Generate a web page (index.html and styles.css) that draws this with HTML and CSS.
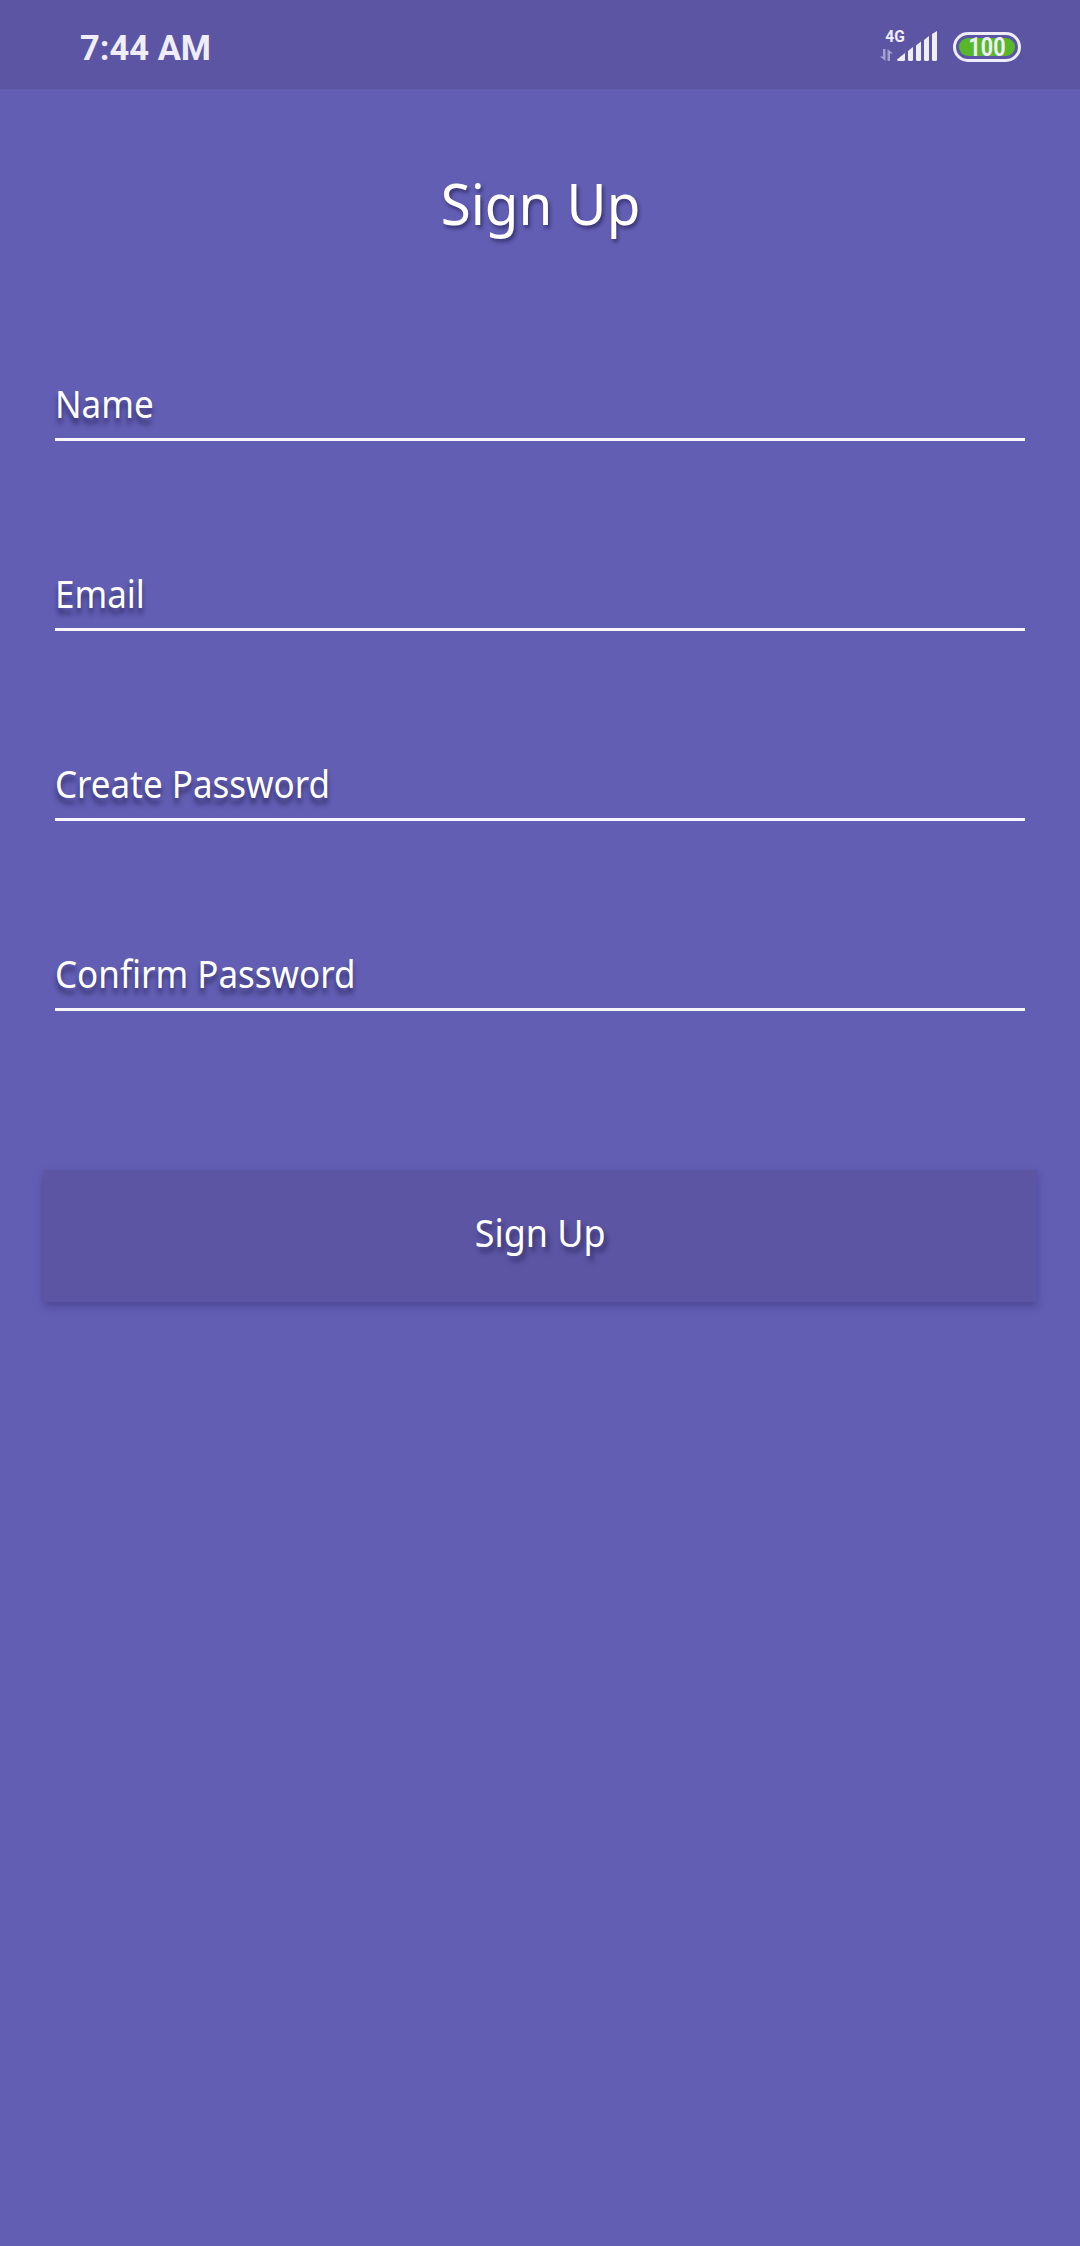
FILE: index.html
```html
<!DOCTYPE html>
<html lang="en">
<head>
<meta charset="utf-8">
<title>Sign Up</title>
<link rel="stylesheet" href="styles.css">
</head>
<body>
<header class="status">
  <span class="time">7:44 AM</span>
  <svg class="signal" width="60" height="40" viewBox="0 0 60 40">
    <text class="network" x="5.3" y="14.3" textLength="19.5" lengthAdjust="spacingAndGlyphs">4G</text>
    <g fill="#a5a0d0">
      <path d="M3 21H5.5V33L0 28.5H3Z"/>
      <path d="M7.500 21L13 25.500H10V33H7.500Z"/>
    </g>
    <g fill="#efedfa">
      <path d="M17 31.500L25 25V31.500Q25 33 23.500 33H18.500Q17 33 17 31.500Z"/>
      <path d="M28 23L33 19V31.500Q33 33 31.500 33H29.500Q28 33 28 31.500Z"/>
      <path d="M36 17.500L41 13.500V31.500Q41 33 39.500 33H37.500Q36 33 36 31.500Z"/>
      <path d="M44 12L49 8V31.500Q49 33 47.500 33H45.500Q44 33 44 31.500Z"/>
      <path d="M52 6L57 3V31.500Q57 33 55.500 33H53.500Q52 33 52 31.500Z"/>
    </g>
  </svg>
  <svg class="battery" width="68" height="30" viewBox="0 0 68 30">
    <rect x="1.5" y="1.5" width="65" height="27" rx="13.5" fill="none" stroke="#efedfa" stroke-width="3"/>
    <rect x="6" y="6" width="56" height="18" rx="9" fill="#58b82a"/>
    <text class="level" x="15.5" y="24" textLength="37" lengthAdjust="spacingAndGlyphs">100</text>
  </svg>
</header>
<main class="page">
  <h1 class="title">Sign Up</h1>
  <form class="form">
    <div class="field"><label class="label">Name</label></div>
    <div class="field"><label class="label">Email</label></div>
    <div class="field"><label class="label">Create Password</label></div>
    <div class="field"><label class="label">Confirm Password</label></div>
    <button class="submit" type="button"><span class="caption">Sign Up</span></button>
  </form>
</main>
</body>
</html>
```
FILE: styles.css
```css
* { box-sizing: border-box; }

body {
  margin: 0;
  min-height: 2246px;
  background: #615eb4;
  color: #fff;
  font-family: "Noto Sans", "Open Sans", sans-serif;
}

.status {
  display: flex;
  height: 89px;
  padding: 0 59px 0 80px;
  background: #5b55a4;
  color: #efedfa;
  font-family: Roboto, sans-serif;
}

.time {
  margin-top: 26px;
  font-size: 34.5px;
  font-weight: 700;
  line-height: 44px;
  white-space: nowrap;
}

.signal { margin: 28px 13px 0 auto; }
.battery { margin-top: 32px; }
.network { font-size: 16.4px; font-weight: 700; fill: #efedfa; }
.level { font-size: 25px; font-weight: 700; fill: #efedfa; }

.page { padding: 76px 43.5px 0; }

.title {
  margin: 0 0 135px;
  font-size: 56px;
  font-weight: 400;
  line-height: 76px;
  text-align: center;
  text-shadow: 2px 3px 4px rgba(30, 25, 70, 0.6);
  transform: scaleX(0.978);
}

.form {
  display: flex;
  flex-direction: column;
}

.field {
  height: 65px;
  margin: 0 11.5px 125px;
  padding-top: 3px;
  border-bottom: 3px solid #f6f6fc;
}

.label {
  display: inline-block;
  font-size: 37.4px;
  line-height: 50px;
  white-space: nowrap;
  text-shadow: 0 6px 6px rgba(30, 25, 70, 0.65);
  transform: scaleX(0.936);
  transform-origin: left;
}

.submit {
  height: 132px;
  margin-top: 33.5px;
  padding: 0 0 5px;
  border: 0;
  border-radius: 0;
  background: #5b55a4;
  color: #fff;
  font-family: inherit;
  box-shadow: 0 4px 8px rgba(40, 30, 90, 0.35);
}

.caption {
  display: inline-block;
  font-size: 37.4px;
  line-height: 50px;
  text-shadow: 3px 5px 5px rgba(30, 25, 70, 0.6);
  transform: scaleX(0.96);
}
```
